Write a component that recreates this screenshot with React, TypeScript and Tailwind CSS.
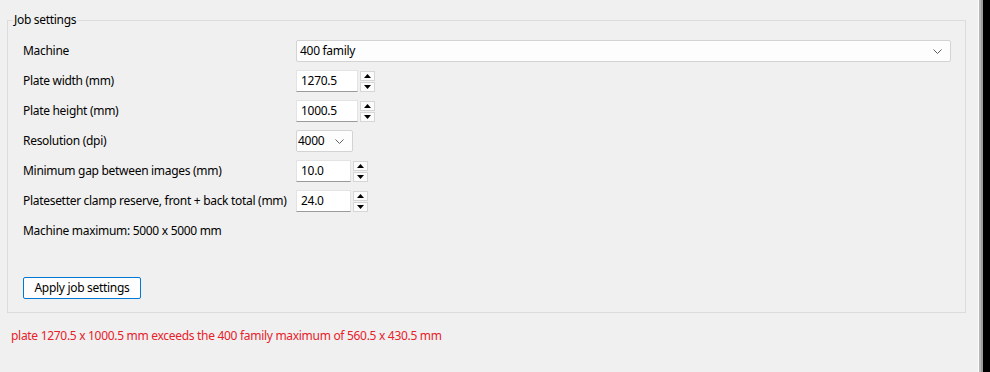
function SpinButtons() {
  return (
    <div className="flex flex-col gap-[1px] ml-[2px]">
      <div className="w-[15px] h-[10px] bg-[#fbfbfb] border border-[#d6d6d6] flex items-center justify-center">
        <svg width="7" height="4" viewBox="0 0 7 4">
          <polygon points="0,4 7,4 3.5,0" fill="#000" />
        </svg>
      </div>
      <div className="w-[15px] h-[10px] bg-[#fbfbfb] border border-[#d6d6d6] flex items-center justify-center">
        <svg width="7" height="4" viewBox="0 0 7 4">
          <polygon points="0,0 7,0 3.5,4" fill="#000" />
        </svg>
      </div>
    </div>
  );
}

function NumberField({ value, width }: { value: string; width: string }) {
  return (
    <div className="flex items-center">
      <div
        className={`${width} h-[22px] bg-white border border-[#e3e3e3] border-b-[#9a9a9a] pl-[4px] flex items-center`}
      >
        {value}
      </div>
      <SpinButtons />
    </div>
  );
}

function Chevron() {
  return (
    <svg width="9" height="5" viewBox="0 0 9 5" className="text-[#606060]">
      <polyline points="0.5,0.5 4.5,4.5 8.5,0.5" fill="none" stroke="currentColor" strokeWidth="1" />
    </svg>
  );
}

export default function App() {
  const rows = [
    { label: "Plate width (mm)", value: "1270.5", width: "w-[62px]" },
    { label: "Plate height (mm)", value: "1000.5", width: "w-[62px]" },
  ];

  return (
    <div className="flex w-[990px] h-[372px] bg-[#f0f0f0] text-[12px] tracking-[-0.3px] text-black font-['Noto_Sans',sans-serif] leading-[16px]">
      <div className="flex-1 pt-[12px] pl-[7px] pr-[12px]">
        <fieldset className="border border-[#dcdcdc] pl-[15px] pr-[14px] pt-[12px] pb-[13px]">
          <legend className="ml-[-10px] px-[1px] leading-[16px]">Job settings</legend>
          <div className="grid grid-cols-[273px_1fr] gap-y-[8px] whitespace-nowrap">
            <div className="self-center">Machine</div>
            <div className="h-[22px] bg-[#fdfdfd] border border-[#d3d3d3] rounded-[2px] pl-[3px] pr-[8px] flex items-center justify-between">
              <span>400 family</span>
              <Chevron />
            </div>

            {rows.map((r) => (
              <div key={r.label} className="contents">
                <div className="self-center">{r.label}</div>
                <NumberField value={r.value} width={r.width} />
              </div>
            ))}

            <div className="self-center">Resolution (dpi)</div>
            <div className="w-[57px] h-[22px] bg-[#fdfdfd] border border-[#d3d3d3] rounded-[2px] pl-[1px] pr-[8px] flex items-center justify-between">
              <span>4000</span>
              <Chevron />
            </div>

            <div className="self-center">Minimum gap between images (mm)</div>
            <NumberField value="10.0" width="w-[55px]" />

            <div className="self-center">Platesetter clamp reserve, front + back total (mm)</div>
            <NumberField value="24.0" width="w-[55px]" />

            <div className="col-span-2 h-[22px] flex items-center">Machine maximum: 5000 x 5000 mm</div>
          </div>
          <button className="mt-[35px] w-[118px] h-[22px] bg-[#fdfdfd] border border-[#0078d4] rounded-[2px] flex items-center justify-center">
            Apply job settings
          </button>
        </fieldset>
        <div className="mt-[15px] pl-[4px] text-[#e8202a]">
          plate 1270.5 x 1000.5 mm exceeds the 400 family maximum of 560.5 x 430.5 mm
        </div>
      </div>
      <div className="w-[1px] bg-[#fafafa]" />
      <div className="w-[2px] bg-[#b8b8b8]" />
      <div className="w-[2px] bg-[#9c9c9c]" />
      <div className="w-[7px] bg-black" />
    </div>
  );
}
